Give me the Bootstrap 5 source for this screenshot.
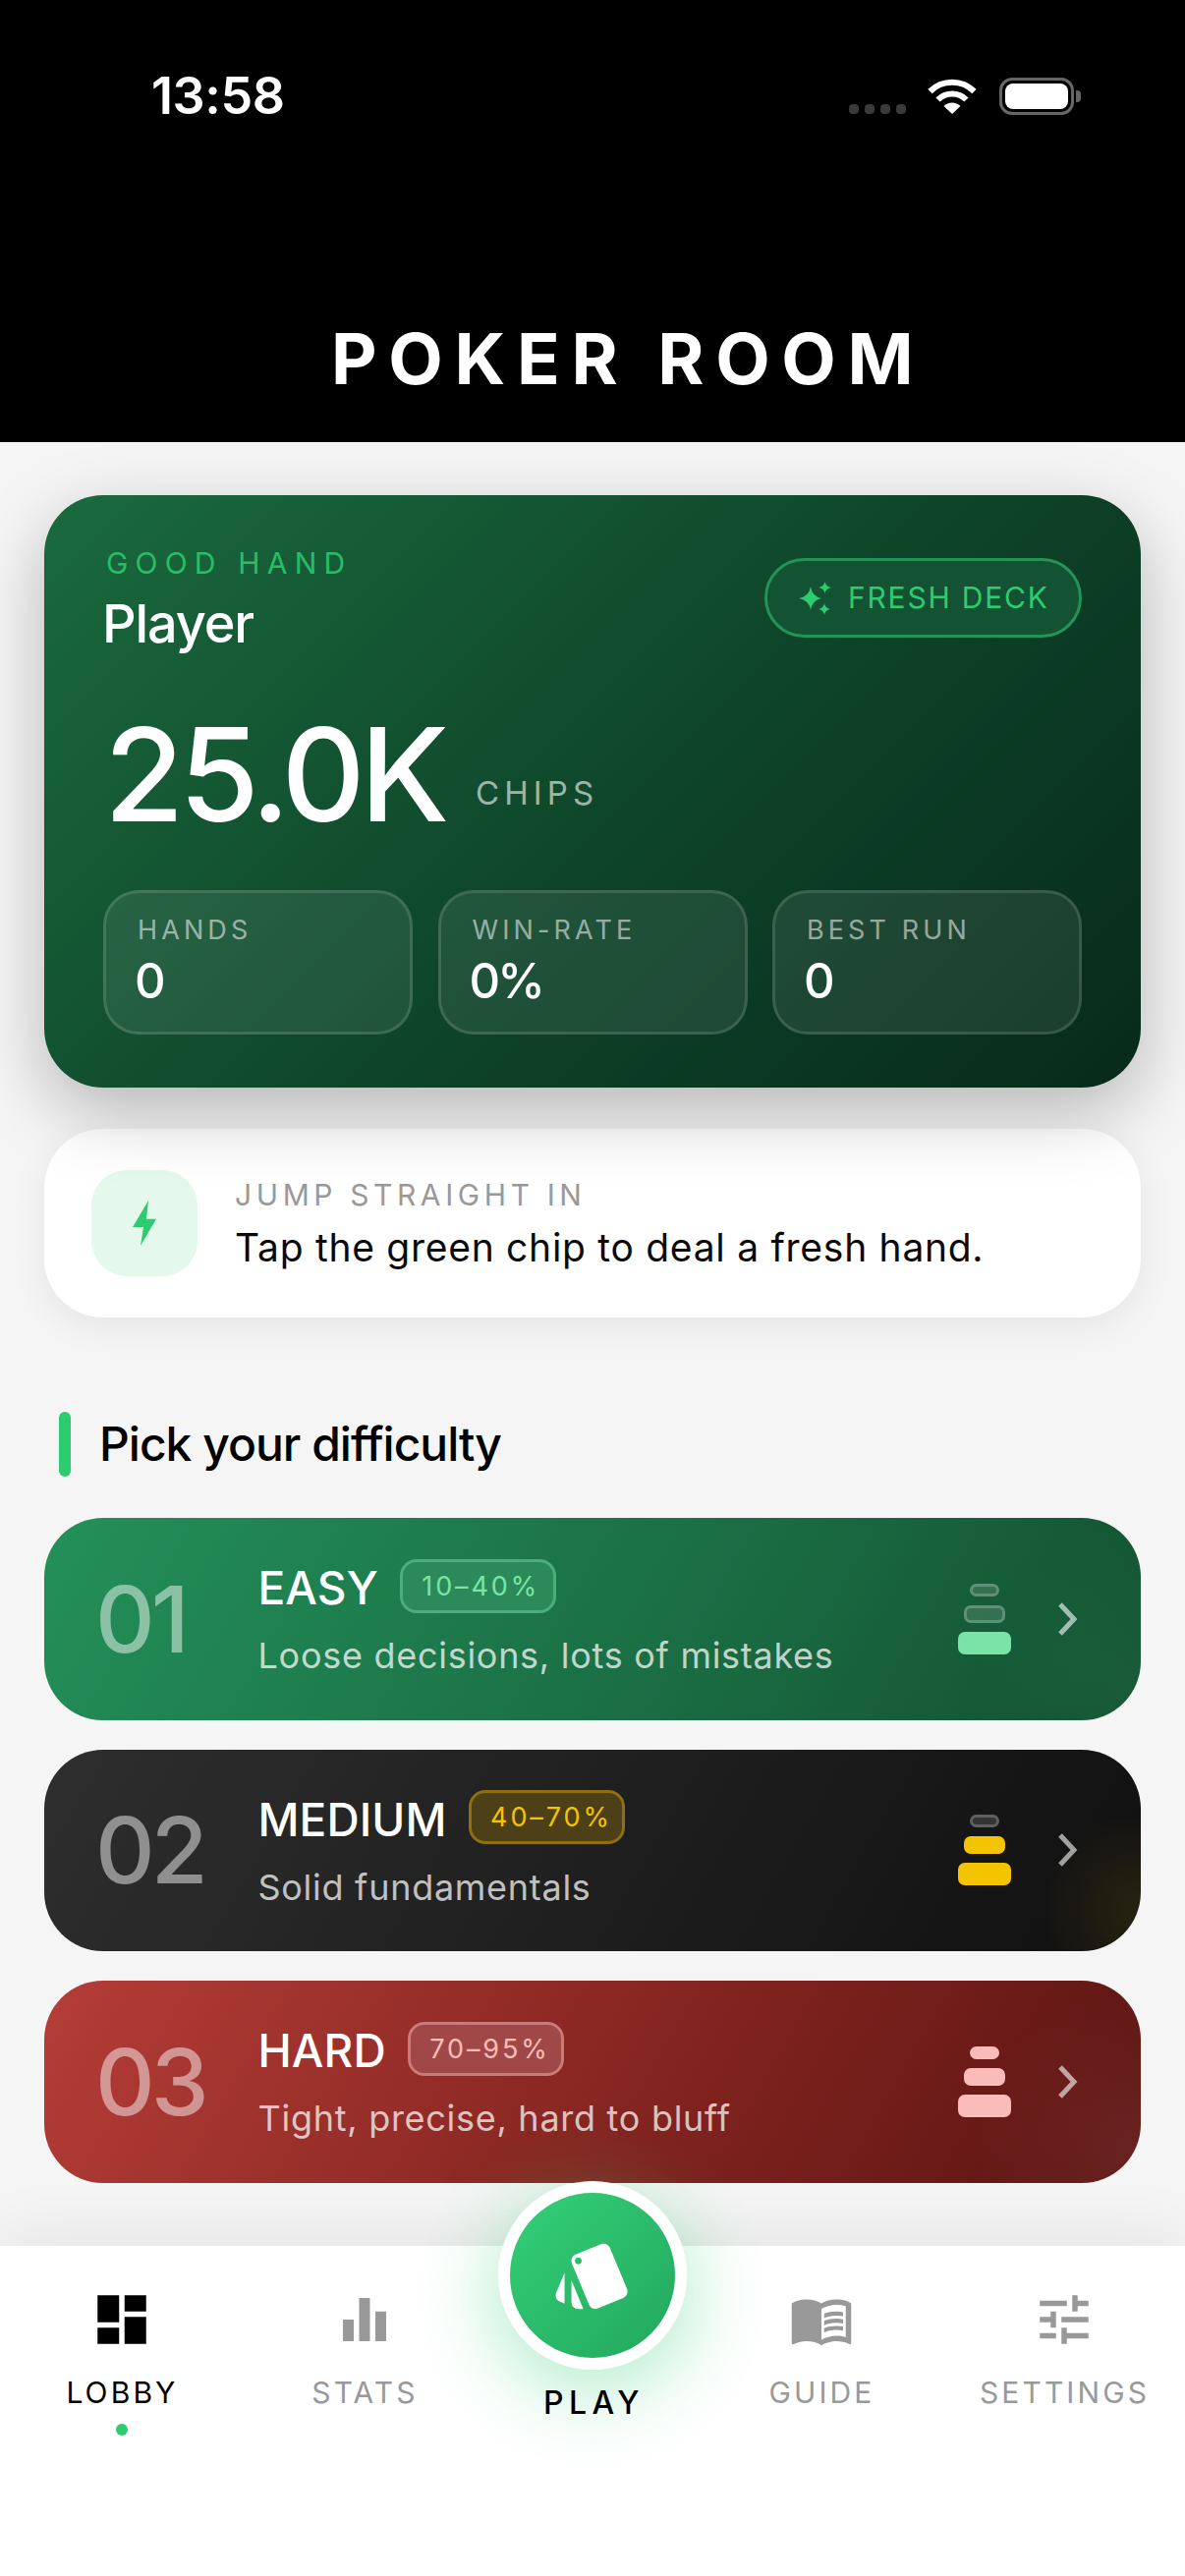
<!DOCTYPE html>
<html lang="en">
<head>
<meta charset="utf-8">
<title>Poker Room</title>
<link href="https://cdn.jsdelivr.net/npm/bootstrap@5.3.0/dist/css/bootstrap.min.css" rel="stylesheet">
<style>
html,body{height:100%;}
body{font-family:"Inter","Liberation Sans",sans-serif;background:#f5f5f5;color:#000;}
.app{height:2622px;overflow:hidden;}
.topbar{background:#000;color:#fff;height:450px;flex:none;}
.statusrow{padding:79px 106px 0 154px;height:118px;}
.clock{font-size:52px;line-height:38px;font-weight:600;letter-spacing:-.4px;}
.sig{width:10px;height:10px;border-radius:4px;background:#3a3a3a;}
.sigs{gap:6px;margin-top:27px;margin-right:22px;}
.batt{width:76px;height:38px;border:3px solid #666;border-radius:13px;padding:3px;margin-left:23px;}
.batt i{display:block;height:100%;background:#fff;border-radius:8px;}
.nub{width:5px;height:12px;background:#666;border-radius:0 4px 4px 0;margin-left:2px;}
.apptitle{font-size:72px;line-height:72px;font-weight:700;letter-spacing:11.7px;padding:211px 0 0 337px;white-space:nowrap;}
.content{flex:1 1 auto;padding:54px 45px 0;}
.hero{height:603px;border:0;border-radius:60px;color:#fff;padding:51px 60px 54px;background:linear-gradient(135deg,#1a6a3e 0%,#0e4429 55%,#072a1a 100%);box-shadow:0 24px 72px rgba(0,0,0,.26);z-index:2;}
.goodhand{font-size:30px;line-height:36px;letter-spacing:7.2px;color:#2ecc71;opacity:.85;padding-left:3px;}
.pname{font-size:54px;line-height:66px;font-weight:500;letter-spacing:-1.1px;margin:11px 0 0 -1px;}
.deckbtn{height:81px;margin-top:13px;width:323px;border:3px solid #24935a;border-radius:41px;background:#135233;color:#2ecc71;font-size:30px;letter-spacing:1.8px;padding:0 0 0 31px;gap:15px;}
.amount{margin-top:54px;height:132px;}
.amt{font-size:132px;line-height:132px;font-weight:500;letter-spacing:-5.2px;margin:0 32px 0 1px;}
.chipsword{font-size:33px;line-height:40px;letter-spacing:5.1px;color:rgba(255,255,255,.6);margin-bottom:27px;}
.stats{margin-top:52px;gap:25.5px;}
.statbox{flex:1 1 0;height:147px;border:3px solid rgba(255,255,255,.13);background:rgba(255,255,255,.08);border-radius:36px;padding:21px 0 0 32px;}
.statlab{font-size:27px;line-height:33px;letter-spacing:4.1px;color:rgba(255,255,255,.55);}
.statval{font-size:49px;line-height:60px;font-weight:500;letter-spacing:-3px;margin:6px 0 0 -3px;}
.tip{margin-top:42px;height:192px;border:0;border-radius:60px;background:#fff;padding:0 48px;gap:38px;box-shadow:0 9px 36px rgba(0,0,0,.07);}
.tipicon{width:108px;height:108px;border-radius:36px;background:#e4f8ec;}
.tiptitle{font-size:30px;line-height:36px;letter-spacing:4.6px;color:#999;margin-top:5px;}
.tiptext{font-size:39px;line-height:54px;letter-spacing:.72px;color:#0a0a0a;margin-top:9px;}
.sechead{margin:96px 0 42px 15px;gap:29px;height:66px;}
.secbar{width:12px;height:66px;border-radius:6px;background:#2ecc71;}
.sectitle{font-size:48px;line-height:66px;font-weight:500;letter-spacing:-1px;}
.levels{gap:30px;}
.lvl{height:205.5px;border:0;border-radius:60px;color:#fff;padding:0 63px 0 52px;}
.lvl-easy{background:radial-gradient(circle at 100% 85%,rgba(122,227,166,.07),transparent 170px),linear-gradient(120deg,#239059 0%,#1a6c43 60%,#125030 100%);}
.lvl-med{background:radial-gradient(circle at 100% 80%,rgba(245,196,0,.1),transparent 100px),linear-gradient(120deg,#2e2e2e 0%,#1c1c1c 60%,#101010 100%);}
.lvl-hard{background:radial-gradient(circle at 100% 85%,rgba(249,188,184,.08),transparent 170px),linear-gradient(120deg,#b53d37 0%,#7f221e 60%,#5a1512 100%);}
.lvlnum{width:165.5px;font-size:94px;line-height:96px;font-weight:500;letter-spacing:-4px;color:rgba(255,255,255,.48);flex:none;}
.lvlname{font-size:46px;line-height:60px;font-weight:500;letter-spacing:.1px;}
.lvlhead{gap:22.5px;}
.range{height:55px;border-radius:17px;border:3px solid;font-size:27px;line-height:49px;font-weight:400;letter-spacing:2.9px;padding:0 0 0 19px;width:159px;text-align:left;margin-bottom:4px;}
.range-easy{background:#2c8a5a;border-color:#4cae7a;color:#7ae3a6;}
.range-med{background:#4d4019;border-color:#8f7010;color:#f5c400;}
.range-hard{background:#a04848;border-color:#c97b78;color:#fbbcb8;}
.lvldesc{font-size:36px;line-height:48px;letter-spacing:.72px;color:rgba(255,255,255,.72);margin-top:15px;}
.tower{width:54px;gap:9px;margin-right:45.5px;flex:none;}
.tw{display:block;border-radius:7px;border:3px solid rgba(255,255,255,.22);background:rgba(255,255,255,.13);}
.tw1{width:30px;height:13px;}
.tw2{width:42px;height:18px;}
.tw3{width:54px;height:23px;}
.on-easy{background:#7ae3a6;border-color:#7ae3a6;}
.on-med{background:#f5c400;border-color:#f5c400;}
.on-hard{background:#f9bcb8;border-color:#f9bcb8;}
.tabbar{position:relative;z-index:5;height:336px;flex:none;background:#fff;box-shadow:0 -12px 60px rgba(0,0,0,.07);padding-top:42px;align-items:flex-start;flex-wrap:nowrap;}
.tabi{width:247px;flex:none;text-align:center;color:#999;}
.tabi svg{display:block;margin:0 auto;fill:currentColor;}
.tablab{font-size:30px;line-height:36px;letter-spacing:3.1px;padding-left:2px;margin-top:23px;white-space:nowrap;}
.tabi.act{color:#000;}
.tabdot{width:12px;height:12px;border-radius:50%;background:#2ecc71;margin:14px auto 0;}
.playi{width:218px;flex:none;text-align:center;margin-top:-108px;}
.playbtn{width:192px;height:192px;border-radius:50%;border:12px solid #fff;background:linear-gradient(135deg,#34d077,#22a75e);margin:0 auto;padding:0;box-shadow:0 18px 84px rgba(46,204,113,.42);}
.playbtn svg{fill:#fff;}
.playlab{font-size:32px;line-height:36px;letter-spacing:5.4px;font-weight:500;color:#000;margin-top:16px;padding-left:3px;}
</style>
</head>
<body>
<div class="app d-flex flex-column">
  <header class="topbar">
    <div class="statusrow d-flex justify-content-between align-items-start">
      <div class="clock">13:58</div>
      <div class="d-flex align-items-start">
        <div class="sigs d-flex"><span class="sig"></span><span class="sig"></span><span class="sig"></span><span class="sig"></span></div>
        <svg width="50" height="37" viewBox="0 0 50 37" fill="none" stroke="#fff" stroke-width="6"><path d="M2.5 14 A32 32 0 0 1 47.5 14"/><path d="M10.5 22.5 A20.5 20.5 0 0 1 39.5 22.5"/><path d="M25 37 L16.5 29 A12 12 0 0 1 33.5 29 Z" fill="#fff" stroke="none"/></svg>
        <div class="batt"><i></i></div>
        <div class="nub align-self-center"></div>
      </div>
    </div>
    <div class="apptitle">POKER ROOM</div>
  </header>

  <main class="content">
    <section class="card hero">
      <div class="d-flex justify-content-between align-items-start">
        <div>
          <div class="goodhand">GOOD HAND</div>
          <div class="pname">Player</div>
        </div>
        <button type="button" class="btn deckbtn d-flex align-items-center">
          <svg width="36" height="36" viewBox="0 0 36 36" fill="#2ecc71"><path d="M13 6 Q14.5 16 24 18 Q14.5 20 13 30 Q11.5 20 1 18 Q11.5 16 13 6Z"/><path d="M27.5 1 Q28.3 6 34 7 Q28.3 8 27.5 13 Q26.7 8 21 7 Q26.7 6 27.5 1Z"/><path d="M27 23 Q27.8 28 33 29 Q27.8 30 27 35 Q26.2 30 21 29 Q26.2 28 27 23Z"/></svg>
          <span>FRESH DECK</span>
        </button>
      </div>
      <div class="amount d-flex align-items-end">
        <div class="amt">25.0K</div>
        <div class="chipsword">CHIPS</div>
      </div>
      <div class="stats d-flex">
        <div class="statbox"><div class="statlab">HANDS</div><div class="statval">0</div></div>
        <div class="statbox"><div class="statlab">WIN-RATE</div><div class="statval">0%</div></div>
        <div class="statbox"><div class="statlab">BEST RUN</div><div class="statval">0</div></div>
      </div>
    </section>

    <section class="card tip flex-row align-items-center">
      <div class="tipicon d-flex align-items-center justify-content-center flex-shrink-0">
        <svg width="30" height="50" viewBox="0 0 30 50" fill="#2ecc71"><path d="M19 2 L3 29 L14 29 L11 48 L27 20.7 L17 20.7Z"/></svg>
      </div>
      <div>
        <div class="tiptitle">JUMP STRAIGHT IN</div>
        <div class="tiptext">Tap the green chip to deal a fresh hand.</div>
      </div>
    </section>

    <div class="sechead d-flex align-items-center">
      <span class="secbar"></span>
      <h2 class="sectitle m-0">Pick your difficulty</h2>
    </div>

    <div class="levels d-flex flex-column">
      <a class="card lvl lvl-easy flex-row align-items-center text-decoration-none">
        <div class="lvlnum">01</div>
        <div class="flex-grow-1">
          <div class="lvlhead d-flex align-items-center"><span class="lvlname">EASY</span><span class="badge range range-easy">10–40%</span></div>
          <div class="lvldesc">Loose decisions, lots of mistakes</div>
        </div>
        <div class="tower d-flex flex-column align-items-center"><span class="tw tw1"></span><span class="tw tw2"></span><span class="tw tw3 on-easy"></span></div>
        <svg width="24" height="36" viewBox="0 0 24 36" fill="none" stroke="rgba(255,255,255,.6)" stroke-width="5"><path d="M5 3 L19 18 L5 33"/></svg>
      </a>
      <a class="card lvl lvl-med flex-row align-items-center text-decoration-none">
        <div class="lvlnum">02</div>
        <div class="flex-grow-1">
          <div class="lvlhead d-flex align-items-center"><span class="lvlname">MEDIUM</span><span class="badge range range-med">40–70%</span></div>
          <div class="lvldesc">Solid fundamentals</div>
        </div>
        <div class="tower d-flex flex-column align-items-center"><span class="tw tw1"></span><span class="tw tw2 on-med"></span><span class="tw tw3 on-med"></span></div>
        <svg width="24" height="36" viewBox="0 0 24 36" fill="none" stroke="rgba(255,255,255,.6)" stroke-width="5"><path d="M5 3 L19 18 L5 33"/></svg>
      </a>
      <a class="card lvl lvl-hard flex-row align-items-center text-decoration-none">
        <div class="lvlnum">03</div>
        <div class="flex-grow-1">
          <div class="lvlhead d-flex align-items-center"><span class="lvlname">HARD</span><span class="badge range range-hard">70–95%</span></div>
          <div class="lvldesc">Tight, precise, hard to bluff</div>
        </div>
        <div class="tower d-flex flex-column align-items-center"><span class="tw tw1 on-hard"></span><span class="tw tw2 on-hard"></span><span class="tw tw3 on-hard"></span></div>
        <svg width="24" height="36" viewBox="0 0 24 36" fill="none" stroke="rgba(255,255,255,.6)" stroke-width="5"><path d="M5 3 L19 18 L5 33"/></svg>
      </a>
    </div>
  </main>

  <nav class="nav tabbar">
    <div class="tabi act">
      <svg width="66" height="66" viewBox="0 0 24 24"><path d="M3 13h8V3H3v10zm0 8h8v-6H3v6zm10 0h8V11h-8v10zm0-18v6h8V3h-8z"/></svg>
      <div class="tablab">LOBBY</div>
      <div class="tabdot"></div>
    </div>
    <div class="tabi">
      <svg width="66" height="66" viewBox="0 0 24 24"><path d="M4 12h4v8H4zM10 4h4v16h-4zM16 9h4v11h-4z"/></svg>
      <div class="tablab">STATS</div>
    </div>
    <div class="playi">
      <button type="button" class="btn playbtn d-flex align-items-center justify-content-center">
        <svg width="84" height="84" viewBox="0 0 24 24"><path d="M2.53 19.65l1.34.56v-9.03l-2.43 5.86c-.41 1.02.08 2.19 1.09 2.61zm19.5-3.7L17.07 3.98c-.31-.75-1.04-1.21-1.81-1.23-.26 0-.53.04-.79.15L7.1 5.95c-.75.31-1.21 1.03-1.23 1.8-.01.27.04.54.15.8l4.96 11.97c.31.76 1.05 1.22 1.83 1.23.26 0 .52-.05.77-.15l7.36-3.05c1.02-.42 1.51-1.59 1.09-2.6zM7.88 8.75c-.55 0-1-.45-1-1s.45-1 1-1 1 .45 1 1-.45 1-1 1zm-2 11c0 1.1.9 2 2 2h1.45l-3.45-8.34v6.34z"/></svg>
      </button>
      <div class="playlab">PLAY</div>
    </div>
    <div class="tabi">
      <svg width="66" height="66" viewBox="0 0 24 24"><path d="M21 5c-1.11-.35-2.33-.5-3.5-.5-1.95 0-4.05.4-5.5 1.5-1.45-1.1-3.55-1.5-5.5-1.5S2.45 4.9 1 6v14.65c0 .25.25.5.5.5.1 0 .15-.05.25-.05C3.1 20.45 5.05 20 6.5 20c1.95 0 4.05.4 5.5 1.5 1.35-.85 3.8-1.5 5.5-1.5 1.65 0 3.35.3 4.75 1.05.1.05.15.05.25.05.25 0 .5-.25.5-.5V6c-.6-.45-1.25-.75-2-1zm0 13.5c-1.1-.35-2.3-.5-3.5-.5-1.7 0-4.15.65-5.5 1.5V8c1.35-.85 3.8-1.5 5.5-1.5 1.2 0 2.4.15 3.5.5v11.5z"/><path d="M17.5 10.5c.88 0 1.73.09 2.5.26V9.24c-.79-.15-1.64-.24-2.5-.24-1.7 0-3.24.29-4.5.83v1.66c1.13-.64 2.7-.99 4.5-.99zM13 12.49v1.66c1.13-.64 2.7-.99 4.5-.99.88 0 1.73.09 2.5.26V11.9c-.79-.15-1.64-.24-2.5-.24-1.7 0-3.24.3-4.5.83zm4.5 1.84c-1.7 0-3.24.29-4.5.83v1.66c1.13-.64 2.7-.99 4.5-.99.88 0 1.73.09 2.5.26v-1.52c-.79-.16-1.64-.24-2.5-.24z"/></svg>
      <div class="tablab">GUIDE</div>
    </div>
    <div class="tabi">
      <svg width="66" height="66" viewBox="0 0 24 24"><path d="M3 17v2h6v-2H3zM3 5v2h10V5H3zm10 16v-2h8v-2h-8v-2h-2v6h2zM7 9v2H3v2h4v2h2V9H7zm14 4v-2H11v2h10zm-6-4h2V7h4V5h-4V3h-2v6z"/></svg>
      <div class="tablab">SETTINGS</div>
    </div>
  </nav>
</div>
<script src="https://cdn.jsdelivr.net/npm/bootstrap@5.3.0/dist/js/bootstrap.bundle.min.js"></script>
</body>
</html>
